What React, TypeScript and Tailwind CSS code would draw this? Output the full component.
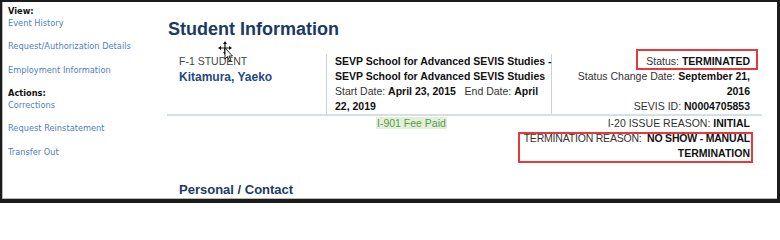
import type { FC } from "react";

const viewLinks = ["Event History", "Request/Authorization Details", "Employment Information"];
const actionLinks = ["Corrections", "Request Reinstatement", "Transfer Out"];

const SideLink: FC<{ label: string; className?: string }> = ({ label, className = "" }) => (
  <a className={`block leading-[12px] text-[#4f80bf] ${className}`}>{label}</a>
);

const MoveCursor: FC = () => (
  <svg
    className="absolute left-[214px] top-[38px] pointer-events-none"
    width="18"
    height="22"
    viewBox="0 0 18 22"
  >
    {/* four-way arrows */}
    <path d="M8 1 L10 4 L8.6 4 L8.6 11 L7.4 11 L7.4 4 L6 4 Z" fill="#111" />
    <path d="M8 15 L10 12 L8.6 12 L8.6 9 L7.4 9 L7.4 12 L6 12 Z" fill="#111" />
    <path d="M1 8 L4 6 L4 7.4 L12 7.4 L12 8.6 L4 8.6 L4 10 Z" fill="#111" />
    <path d="M15 8 L12 6 L12 10 Z" fill="#111" />
    {/* pointer */}
    <path d="M8 8 L8 19 L10.5 16.5 L12.5 21 L14 20.3 L12 16 L15.5 16 Z" fill="#fff" stroke="#111" strokeWidth="0.9" />
  </svg>
);

export default function App() {
  return (
    <div className="w-[780px] h-[203px] bg-[#1c1c1c] pt-[2px] pl-[2px] pr-[3px] pb-[4px] overflow-hidden">
      <div className="relative flex h-full bg-white border-l border-b border-[#b8b8b8] overflow-hidden">
        {/* sidebar */}
        <aside className="w-[157px] shrink-0 pl-[5px] pt-[3px] font-['DejaVu_Sans',Verdana,sans-serif] text-[8.25px]">
          <div className="leading-[12px] font-bold text-[#111]">View:</div>
          <SideLink label={viewLinks[0]} />
          <SideLink label={viewLinks[1]} className="mt-[11px]" />
          <SideLink label={viewLinks[2]} className="mt-[12px]" />
          <div className="mt-[11px] leading-[12px] font-bold text-[#111]">Actions:</div>
          <SideLink label={actionLinks[0]} />
          <SideLink label={actionLinks[1]} className="mt-[11px]" />
          <SideLink label={actionLinks[2]} className="mt-[12px]" />
        </aside>

        {/* main */}
        <main className="flex-1 pl-[7px] font-['Liberation_Sans',Arial,sans-serif] text-[10.5px] text-[#333]">
          <h1 className="mt-[16px] pl-[1px] text-[18px] leading-[22px] font-bold text-[#1b3a64]">
            Student Information
          </h1>

          <div className="mt-[14px] w-[595px] flex border-b-2 border-[#d6dee8]">
            <div className="w-[160px] shrink-0 pl-[12px] border-r border-[#c9d1db]">
              <div className="leading-[15px] text-[#444]">F-1 STUDENT</div>
              <div className="leading-[16px] text-[12px] font-bold text-[#1f4a80]">Kitamura, Yaeko</div>
            </div>
            <div className="w-[225px] shrink-0 pl-[8px] border-r border-[#c9d1db] leading-[15px] whitespace-nowrap">
              <div className="font-bold text-[#111]">SEVP School for Advanced SEVIS Studies -</div>
              <div className="font-bold text-[#111]">SEVP School for Advanced SEVIS Studies</div>
              <div>
                Start Date: <b className="text-[#111]">April 23, 2015</b>&nbsp;&nbsp; End Date:{" "}
                <b className="text-[#111]">April</b>
              </div>
              <div className="font-bold text-[#111]">22, 2019</div>
            </div>
            <div className="flex-1 pr-[12px] text-right leading-[15px] whitespace-nowrap">
              <div>
                <span className="relative">
                  Status: <b className="text-[#111]">TERMINATED</b>
                  <span className="absolute -left-[10px] -right-[8px] -top-[6px] -bottom-[3px] border-2 border-[#e5393b]" />
                </span>
              </div>
              <div>
                Status Change Date: <b className="text-[#111]">September 21,</b>
              </div>
              <div className="font-bold text-[#111]">2016</div>
              <div>
                SEVIS ID: <b className="text-[#111]">N0004705853</b>
              </div>
            </div>
          </div>

          <div className="w-[595px] flex">
            <div className="pl-[209px]">
              <span className="inline-block leading-[12px] px-[1px] bg-[#e2f0da] text-[#5c9a4c]">I-901 Fee Paid</span>
            </div>
            <div className="flex-1 pr-[12px] text-right leading-[15px] whitespace-nowrap">
              <div>
                I-20 ISSUE REASON: <b className="text-[#111]">INITIAL</b>
              </div>
              <div className="relative ml-auto w-fit">
                <div className="tracking-[-0.2px]">
                  TERMINATION REASON:&nbsp; <b className="text-[#111]">NO SHOW - MANUAL</b>
                </div>
                <div className="font-bold text-[#111]">TERMINATION</div>
                <span className="absolute left-[-6px] right-[-3px] top-[1px] bottom-[-2px] border-2 border-[#e5393b]" />
              </div>
            </div>
          </div>

          <h2 className="mt-[21px] pl-[12px] text-[13px] leading-[16px] font-bold text-[#1b3a64]">
            Personal / Contact
          </h2>
        </main>

        <MoveCursor />
      </div>
    </div>
  );
}
